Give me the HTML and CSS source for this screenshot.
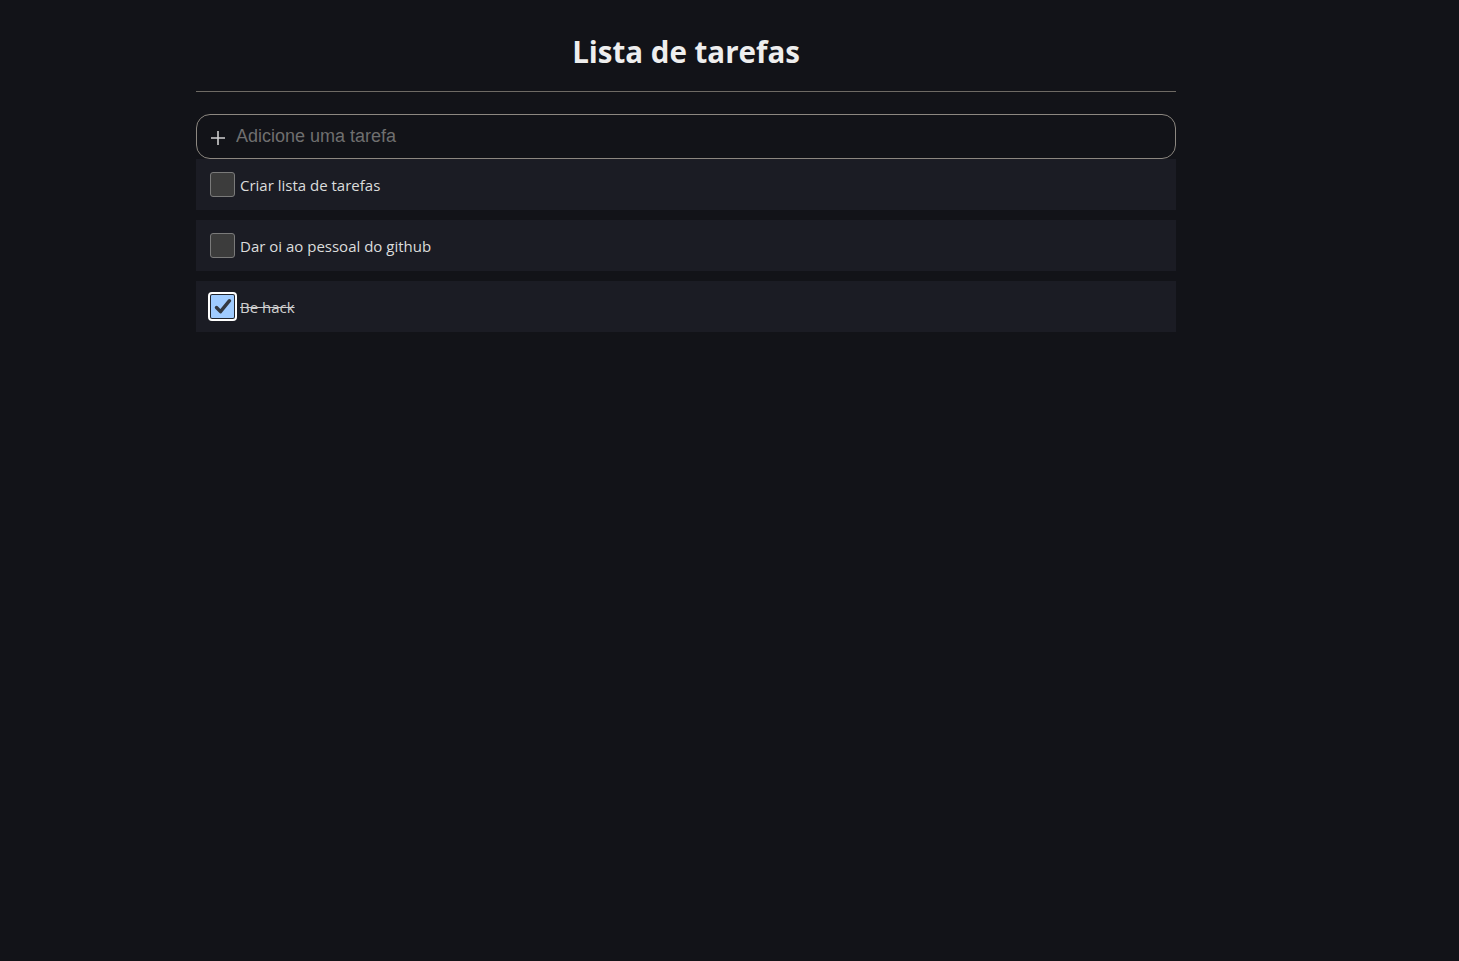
FILE: index.html
```html
<!DOCTYPE html>
<html lang="pt">
<head>
<meta charset="utf-8">
<title>Lista de tarefas</title>
<link rel="stylesheet" href="styles.css">
</head>
<body>
<main class="app">
  <h1 class="title">Lista de tarefas</h1>
  <hr class="divider">
  <form class="add">
    <svg class="add-icon" width="16" height="16" viewBox="0 0 16 16" aria-hidden="true"><path d="M8 1v14M1 8h14" stroke="#cfcfcf" stroke-width="1.6" fill="none"/></svg>
    <input class="add-input" type="text" placeholder="Adicione uma tarefa">
  </form>
  <ul class="tasks">
    <li class="task"><span class="box"></span><span class="label">Criar lista de tarefas</span></li>
    <li class="task"><span class="box"></span><span class="label">Dar oi ao pessoal do github</span></li>
    <li class="task done"><span class="box checked"><svg width="20" height="20" viewBox="0 0 20 20" aria-hidden="true"><path d="M3.5 10.5l4 4.2 9-11" stroke="#333840" stroke-width="3.4" fill="none" stroke-linecap="round" stroke-linejoin="round"/></svg></span><span class="label">Be hack</span></li>
  </ul>
</main>
</body>
</html>
```
FILE: styles.css
```css
html, body {
  margin: 0;
  padding: 0;
  background: #121318;
  height: 100%;
}
body {
  font-family: "Open Sans", "Noto Sans", sans-serif;
  color: #e6e6e6;
}
.app {
  width: 980px;
  margin-left: 196px;
  padding-top: 28px;
}
.title {
  margin: 0;
  text-align: center;
  font-size: 29.5px;
  font-weight: 700;
  line-height: 48px;
  color: #eeeeee;
}
.divider {
  margin: 15px 0 22px;
  border: 0;
  border-top: 1px solid #6e6a64;
  height: 0;
}
.add {
  margin: 0;
  height: 43px;
  border: 1px solid #8c8780;
  border-radius: 14px;
  display: flex;
  align-items: center;
  gap: 10px;
  padding: 0 12px 0 13px;
  background: #121318;
}
.add-icon { flex: none; margin-top: 2px; }
.add-input {
  flex: 1;
  background: transparent;
  border: 0;
  outline: none;
  font-family: "Liberation Sans", Arial, sans-serif;
  font-size: 18px;
  color: #ddd;
  padding: 0;
}
.add-input::placeholder { color: #6f6f6f; }
.tasks {
  list-style: none;
  margin: 0;
  padding: 0;
  display: flex;
  flex-direction: column;
  gap: 10px;
}
.task {
  height: 51px;
  background: #1b1c24;
  display: flex;
  align-items: center;
  padding-left: 14px;
  gap: 5px;
  font-size: 15px;
  color: #dcdcdc;
}
.box {
  width: 23px;
  height: 23px;
  border: 1px solid #7a7a7a;
  border-radius: 3px;
  background: #3c3c3c;
  flex: none;
  display: flex;
  align-items: center;
  justify-content: center;
}
.box.checked {
  background: #9fcbff;
  border: 1px solid #20242c;
  outline: 2px solid #ffffff;
  outline-offset: 0;
  border-radius: 2px;
}
.done .label {
  text-decoration: line-through;
  color: #cfcfcf;
}
```
